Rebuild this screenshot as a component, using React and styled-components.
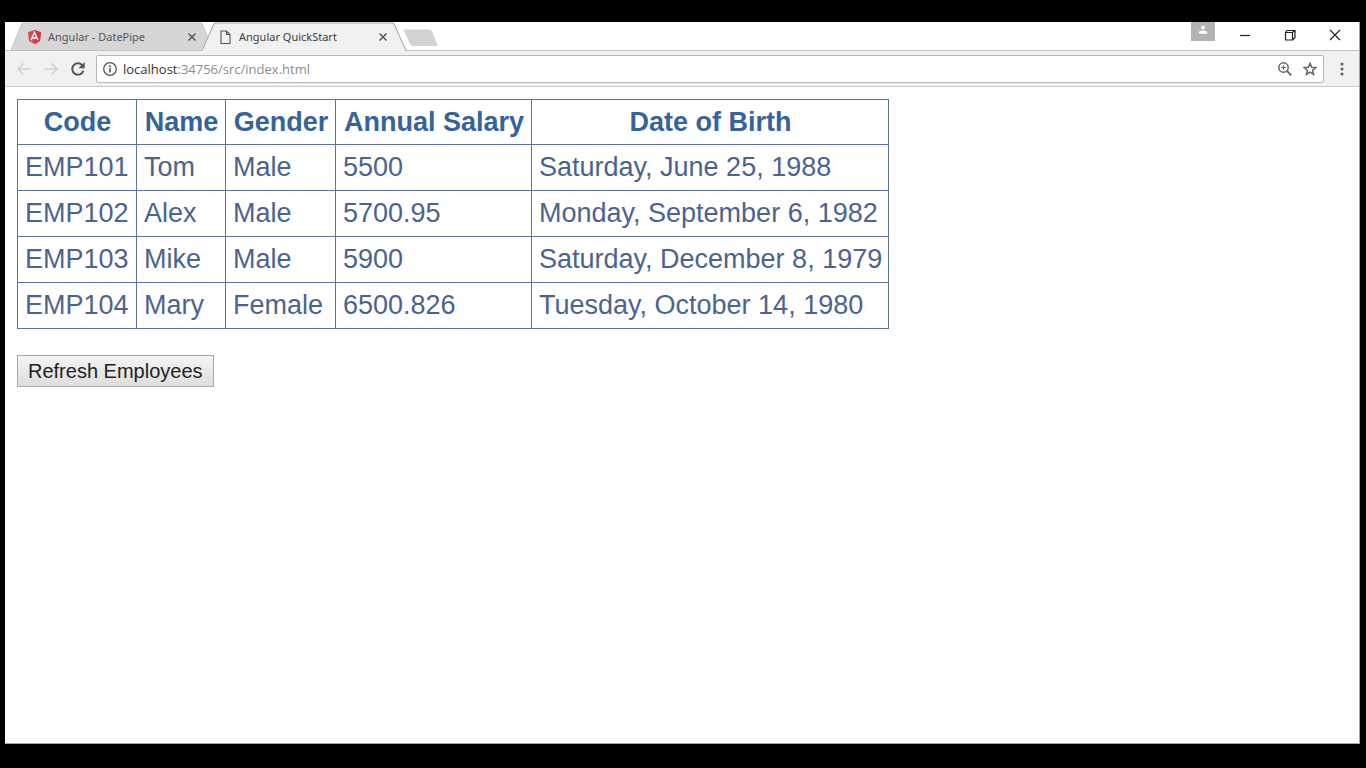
import React from 'react';
import styled, { createGlobalStyle } from 'styled-components';

const GlobalStyle = createGlobalStyle`
  * { box-sizing: border-box; }
  body { margin: 0; background: #000; }
`;

const Screen = styled.div`
  display: flex;
  min-height: 100vh;
  padding: 22px 6px 24px 5px;
  background: #000;
`;

const Window = styled.div`
  display: flex;
  flex-direction: column;
  flex: 1;
  min-width: 0;
  background: #fff;
  border: solid #a3a5a6;
  border-width: 0 1px 1px 0;
  font-family: 'Open Sans', 'Noto Sans', sans-serif;
`;

const TitleBar = styled.header`
  display: flex;
  align-items: flex-start;
  height: 29px;
  padding-left: 6px;
  background: #fff;
  box-shadow: inset 0 -1px #c4c4c4;
`;

const TabList = styled.nav`
  display: flex;
`;

const Tab = styled.div`
  position: relative;
  z-index: ${(p) => (p.$active ? 1 : 0)};
  display: flex;
  align-items: center;
  width: 205px;
  height: 29px;
  padding: 0 16px;
  margin-right: -14px;
  color: ${(p) => (p.$active ? '#3c3c3c' : '#555')};
  font-family: 'Noto Sans', 'Open Sans', sans-serif;
  font-size: 11px;
  line-height: 16px;
`;

const TabShape = styled.svg`
  position: absolute;
  inset: 0;
  width: 100%;
  height: 100%;
`;

const TabLink = styled.a`
  position: relative;
  display: flex;
  flex: 1;
  align-items: center;
  gap: 6px;
  color: inherit;
  text-decoration: none;
  white-space: nowrap;
`;

const IconButton = styled.button`
  position: relative;
  display: flex;
  align-items: center;
  justify-content: center;
  flex: none;
  width: ${(p) => p.$width || 16}px;
  height: ${(p) => p.$height || 16}px;
  padding: 0;
  border: 0;
  background: none;
  color: ${(p) => p.$color || '#555'};
`;

const NewTab = styled(IconButton)`
  margin: 7px 0 0 10px;
`;

const WindowControls = styled.div`
  display: flex;
  align-items: flex-start;
  margin-left: auto;
`;

const Profile = styled(IconButton)`
  align-items: flex-start;
  padding-top: 3px;
  margin-right: 7px;
  background: #b3b3b3;
`;

const Toolbar = styled.div`
  display: flex;
  align-items: center;
  height: 36px;
  padding: 0 9px 0 11px;
  background: #f1f1f1;
  border-bottom: 1px solid #c9c9cb;
`;

const NavButtons = styled.div`
  display: flex;
  gap: 11px;
  margin-right: 10px;
`;

const AddressBar = styled.div`
  display: flex;
  flex: 1;
  align-items: center;
  gap: 9px;
  height: 28px;
  padding: 0 5px;
  margin-right: 10px;
  background: #fff;
  border: 1px solid #b8b8b8;
  border-radius: 2px;
`;

const Address = styled.a`
  flex: 1;
  margin-left: -4px;
  color: #8c8c8c;
  font-size: 13px;
  line-height: 18px;
  text-decoration: none;
`;

const Host = styled.span`
  color: #333;
`;

const Page = styled.main`
  flex: 1;
  padding: 12px;
  font-family: 'Liberation Sans', Arial, sans-serif;
`;

const Table = styled.table`
  margin-bottom: 26px;
  border-collapse: collapse;
  color: #4b648f;
  font-size: 27px;
  line-height: 31px;
  white-space: nowrap;
`;

const Column = styled.col`
  width: ${(p) => p.$width}px;
`;

const HeadCell = styled.th`
  padding: 7px 6px 7px 7px;
  border: 1px solid #5d729b;
  color: #36639c;
  font-weight: bold;
  line-height: 30px;
  text-align: center;
`;

const Cell = styled.td`
  padding: 7px 6px 7px 7px;
  border: 1px solid #5d729b;
`;

const RefreshButton = styled.button`
  height: 32px;
  padding: 0 10px;
  border: 1px solid #aaa;
  border-radius: 0;
  background: linear-gradient(#f4f4f4, #dedede);
  color: #222;
  font-family: inherit;
  font-size: 20px;
  line-height: 24px;
`;

const columns = [
  { name: 'Code', width: 119 },
  { name: 'Name', width: 89 },
  { name: 'Gender', width: 110 },
  { name: 'Annual Salary', width: 196 },
  { name: 'Date of Birth', width: 357 },
];

const employees = [
  ['EMP101', 'Tom', 'Male', '5500', 'Saturday, June 25, 1988'],
  ['EMP102', 'Alex', 'Male', '5700.95', 'Monday, September 6, 1982'],
  ['EMP103', 'Mike', 'Male', '5900', 'Saturday, December 8, 1979'],
  ['EMP104', 'Mary', 'Female', '6500.826', 'Tuesday, October 14, 1980'],
];

const AngularIcon = () => (
  <svg width="15" height="16" viewBox="0 0 15 16">
    <path d="M7.5 1 14 3.3 13 12 7.5 15 2 12 1 3.3Z" fill="#e2454d" />
    <path d="M7.5 1 14 3.3 13 12 7.5 15Z" fill="#cc3a42" />
    <path d="M4 11.2 7.5 3.4 11 11.2M5.4 9h4.2" fill="none" stroke="#fff" strokeWidth="1.4" />
  </svg>
);

const FileIcon = () => (
  <svg width="15" height="16" viewBox="0 0 15 16" fill="none" stroke="#555" strokeWidth="1.1">
    <path d="M3 2h5.5L12 5.5V14.5H3ZM8.5 2v3.5H12" />
  </svg>
);

const CrossIcon = () => (
  <svg width="8" height="8" viewBox="0 0 8 8" stroke="currentColor" strokeWidth="1.5">
    <path d="M.5.5l7 7M7.5.5l-7 7" />
  </svg>
);

const ArrowIcon = ({ forward }) => (
  <svg width="16" height="16" viewBox="0 0 16 16" fill="none" stroke="currentColor" strokeWidth="1.7">
    <path d={forward ? 'M1.5 8H14M8.5 2.5 14 8l-5.5 5.5' : 'M14.5 8H2M7.5 2.5 2 8l5.5 5.5'} />
  </svg>
);

const ReloadIcon = () => (
  <svg width="16" height="16" viewBox="0 0 16 16">
    <path d="M12.8 5A5.7 5.7 0 1 0 13.4 9.7" fill="none" stroke="currentColor" strokeWidth="2" />
    <path d="M14.7 1v6.3H8.4Z" fill="currentColor" />
  </svg>
);

const InfoIcon = () => (
  <svg width="16" height="16" viewBox="0 0 16 16" fill="none" stroke="currentColor">
    <circle cx="8" cy="8" r="6.3" strokeWidth="1.3" />
    <path d="M8 7v4.5M8 4.3v1.6" strokeWidth="1.6" />
  </svg>
);

const ZoomIcon = () => (
  <svg width="16" height="16" viewBox="0 0 16 16" fill="none" stroke="currentColor" strokeWidth="1.5">
    <circle cx="6.5" cy="6.5" r="4.7" />
    <path d="m10 10 4.3 4.3" strokeWidth="1.9" />
    <path d="M6.5 4.2v4.6M4.2 6.5h4.6" strokeWidth="1.2" />
  </svg>
);

const StarIcon = () => (
  <svg width="16" height="16" viewBox="0 0 16 16" fill="none" stroke="currentColor" strokeWidth="1.5">
    <path d="m8 2.4 1.6 3.9 4.2.3-3.2 2.7 1 4.1L8 11.2l-3.6 2.2 1-4.1-3.200-2.700 4.200-.3Z" />
  </svg>
);

const DotsIcon = () => (
  <svg width="4" height="14" viewBox="0 0 4 14" fill="currentColor">
    <circle cx="2" cy="2" r="1.6" />
    <circle cx="2" cy="7" r="1.6" />
    <circle cx="2" cy="12" r="1.6" />
  </svg>
);

const PersonIcon = () => (
  <svg width="10" height="10" viewBox="0 0 10 10" fill="#fff">
    <circle cx="5" cy="2.6" r="2" />
    <path d="M.8 8.8V7.5Q1.5 5.6 5 5.6T9.2 7.5V8.8Z" />
  </svg>
);

const MinimizeIcon = () => (
  <svg width="12" height="12" viewBox="0 0 12 12" stroke="currentColor" strokeWidth="1.2">
    <path d="M1 6.5h10" />
  </svg>
);

const RestoreIcon = () => (
  <svg width="12" height="12" viewBox="0 0 12 12" fill="none" stroke="currentColor" strokeWidth="1.2">
    <path d="M1.5 3.5h7V11h-7ZM1.5 3.5l1.5-2h8v7L8.5 11M8.5 3.5l2.5-2" />
  </svg>
);

const CloseIcon = () => (
  <svg width="12" height="12" viewBox="0 0 12 12" stroke="currentColor" strokeWidth="1.2">
    <path d="m1 1 10 10M11 1 1 11" />
  </svg>
);

const BrowserTab = ({ active, title, icon }) => (
  <Tab $active={active}>
    <TabShape viewBox="0 0 204 29" preserveAspectRatio="none" aria-hidden="true">
      <path
        d={active ? 'M0 29 11 4Q12 1 14 1H189Q191 1 192 4L203 28H204V29Z' : 'M0 28 10 4Q11 1 13 1H188Q190 1 191 4L201 28Z'}
        fill={active ? '#f1f1f1' : '#d6d6d6'}
      />
      <path
        d={active ? 'M0 28.5 11 4Q12 1 14 1H189Q191 1 192 4L203 28.5H204' : 'M0 28 10 4Q11 1 13 1H188Q190 1 191 4L201 28'}
        fill="none"
        stroke={active ? '#a9a9a9' : '#c6c6c6'}
      />
    </TabShape>
    <TabLink href="#">
      {icon}
      {title}
    </TabLink>
    <IconButton aria-label={`Close ${title}`}>
      <CrossIcon />
    </IconButton>
  </Tab>
);

export default function App() {
  return (
    <Screen>
      <GlobalStyle />
      <Window>
        <TitleBar>
          <TabList>
            <BrowserTab title="Angular - DatePipe" icon={<AngularIcon />} />
            <BrowserTab active title="Angular QuickStart" icon={<FileIcon />} />
          </TabList>
          <NewTab aria-label="New tab" $width={36} $height={18}>
            <svg width="36" height="18" viewBox="0 0 36 18">
              <path d="M2 .5H26Q28 .5 29 2L34 15Q35 17 33 17H10Q8 17 7 15L1 2Q.5.5 2 .5Z" fill="#d2d2d2" />
            </svg>
          </NewTab>
          <WindowControls>
            <Profile aria-label="Profile" $width={24} $height={19}>
              <PersonIcon />
            </Profile>
            <IconButton aria-label="Minimize" $width={46} $height={26} $color="#222">
              <MinimizeIcon />
            </IconButton>
            <IconButton aria-label="Restore" $width={43} $height={26} $color="#222">
              <RestoreIcon />
            </IconButton>
            <IconButton aria-label="Close" $width={48} $height={26} $color="#222">
              <CloseIcon />
            </IconButton>
          </WindowControls>
        </TitleBar>
        <Toolbar>
          <NavButtons>
            <IconButton aria-label="Back" $color="#d0d0d0">
              <ArrowIcon />
            </IconButton>
            <IconButton aria-label="Forward" $color="#d0d0d0">
              <ArrowIcon forward />
            </IconButton>
            <IconButton aria-label="Reload">
              <ReloadIcon />
            </IconButton>
          </NavButtons>
          <AddressBar>
            <IconButton aria-label="Site information">
              <InfoIcon />
            </IconButton>
            <Address href="#">
              <Host>localhost</Host>:34756/src/index.html
            </Address>
            <IconButton aria-label="Zoom" $color="#666">
              <ZoomIcon />
            </IconButton>
            <IconButton aria-label="Bookmark" $color="#666">
              <StarIcon />
            </IconButton>
          </AddressBar>
          <IconButton aria-label="Menu" $color="#666">
            <DotsIcon />
          </IconButton>
        </Toolbar>
        <Page>
          <Table>
            <colgroup>
              {columns.map(({ name, width }) => (
                <Column key={name} $width={width} />
              ))}
            </colgroup>
            <thead>
              <tr>
                {columns.map(({ name }) => (
                  <HeadCell key={name} scope="col">{name}</HeadCell>
                ))}
              </tr>
            </thead>
            <tbody>
              {employees.map((row) => (
                <tr key={row[0]}>
                  {row.map((value, i) => (
                    <Cell key={columns[i].name}>{value}</Cell>
                  ))}
                </tr>
              ))}
            </tbody>
          </Table>
          <RefreshButton type="button">Refresh Employees</RefreshButton>
        </Page>
      </Window>
    </Screen>
  );
}
